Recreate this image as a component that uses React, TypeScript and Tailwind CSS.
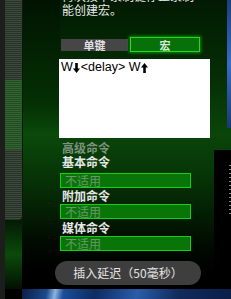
import React from "react";

const cjk = { fontFamily: '"Noto Sans CJK SC", "Noto Sans", sans-serif' };

function Arrow({ up }: { up?: boolean }) {
  return (
    <svg width="7" height="10" viewBox="0 0 7 10" className="inline-block mx-[0.5px]">
      {up ? (
        <path d="M3.5 0 L7 4.5 L4.8 4.5 L4.8 10 L2.2 10 L2.2 4.5 L0 4.5 Z" fill="#000" />
      ) : (
        <path d="M3.5 10 L7 5.5 L4.8 5.5 L4.8 0 L2.2 0 L2.2 5.5 L0 5.5 Z" fill="#000" />
      )}
    </svg>
  );
}

function Field() {
  return (
    <div className="ml-[1px] w-[131px] h-[15px] border border-[#12d012] bg-[#097509] flex items-center pl-[4px]">
      <span className="text-[12px] leading-[13px] text-[#6c956c]" style={cjk}>不适用</span>
    </div>
  );
}

function Label({ children, dim }: { children: React.ReactNode; dim?: boolean }) {
  return (
    <div
      className={`pl-[3px] text-[12px] leading-[14px] font-bold ${dim ? "text-[#7d927d]" : "text-[#e6e6e6]"}`}
      style={cjk}
    >
      {children}
    </div>
  );
}

export default function App() {
  return (
    <div className="relative w-[231px] h-[299px] overflow-hidden bg-black">
      {/* background art */}
      <div className="absolute inset-0 bg-[linear-gradient(180deg,#021a02_0%,#052d05_25%,#0a450a_45%,#063306_60%,#031d03_72%,#010801_84%,#000_92%)]" />
      <div className="absolute left-0 top-0 w-[60px] h-[299px] bg-[linear-gradient(180deg,#011401_0%,#043004_35%,#0a4a0a_45%,#052a05_65%,#020c02_80%,#000_90%)]" />
      <div className="absolute left-[22px] top-[0px] w-[1px] h-[230px] bg-[#0a1a0a]" />
      <div className="absolute left-[0px] top-0 w-[5px] h-[299px] bg-[#1c1e1c]" />
      <div className="absolute left-[5px] top-0 w-[17px] h-[220px] rounded-br-[4px] bg-[repeating-linear-gradient(180deg,#3c4a3c_0px,#3c4a3c_1px,#283228_1px,#283228_2px)]" />
      <div className="absolute left-[5px] top-[80px] w-[17px] h-[70px] bg-[repeating-linear-gradient(180deg,#2f6a2f_0px,#2f6a2f_1px,#245224_1px,#245224_2px)] opacity-80" />
      <div className="absolute left-[5px] top-[220px] w-[17px] h-[69px] bg-[linear-gradient(180deg,#031a03,#0b4a0b_50%,#021002)]" />
      <div className="absolute left-[214px] top-[150px] w-[17px] h-[139px] bg-black" />
      <div className="absolute left-[229px] top-[165px] w-[2px] h-[50px] bg-[repeating-linear-gradient(180deg,#888_0px,#888_1px,transparent_1px,transparent_4px)]" />
      <div className="absolute left-[227px] top-0 w-[4px] h-[128px] bg-[linear-gradient(180deg,#1d3f7a,#3a6cc0_50%,#1a3a70)]" />
      <div className="absolute left-[22px] top-[289px] w-[209px] h-[10px] bg-[linear-gradient(100deg,#0b1f45_0%,#1c4a8c_12%,#8ab4e0_16%,#1a4c98_20%,#0e2c60_35%,#2a5caa_55%,#102a5a_75%,#0a1f48_100%)]" />

      {/* content */}
      <div className="relative pl-[59px] flex flex-col">
        <div className="mt-[-11px] pl-[3px] text-[12px] leading-[14px] text-[#e8e8e8]" style={cjk}>
          <div>再次按下录制键停止录制</div>
          <div>能创建宏。</div>
        </div>

        <div className="mt-[20px] ml-[2px] flex items-center gap-[2px] h-[15px]">
          <div
            className="w-[67px] h-[12px] bg-[#464646] flex items-center justify-center text-[11px] leading-[12px] font-bold text-[#e0e0e0]"
            style={cjk}
          >
            单键
          </div>
          <div
            className="w-[70px] h-[15px] border border-[#22d822] bg-[#087008] shadow-[0_0_3px_1px_#0d8f0d] flex items-center justify-center text-[11px] leading-[12px] font-bold text-[#d8e8d8]"
            style={cjk}
          >
            宏
          </div>
        </div>

        <div className="mt-[7px] w-[151px] h-[79px] bg-white pl-[2px] pt-[2px]">
          <div
            className="flex items-center text-[12.5px] leading-[13px] text-black"
            style={{ fontFamily: '"Liberation Sans", Arial, sans-serif' }}
          >
            <span>W</span>
            <Arrow />
            <span>&lt;delay&gt; W</span>
            <Arrow up />
          </div>
        </div>

        <div className="mt-[3px]">
          <Label dim>高级命令</Label>
        </div>
        <Label>基本命令</Label>
        <div className="mt-[4px]">
          <Field />
        </div>
        <div className="mt-[1px]">
          <Label>附加命令</Label>
        </div>
        <div className="mt-[1px]">
          <Field />
        </div>
        <div className="mt-[2px]">
          <Label>媒体命令</Label>
        </div>
        <div className="mt-[1px]">
          <Field />
        </div>

        <div
          className="mt-[10px] ml-[-4px] w-[146px] h-[24px] rounded-full bg-[#3e3e3e] flex items-center justify-center text-[12px] leading-[14px] text-[#e4e4e4]"
          style={cjk}
        >
          插入延迟（50毫秒）
        </div>
      </div>
    </div>
  );
}
